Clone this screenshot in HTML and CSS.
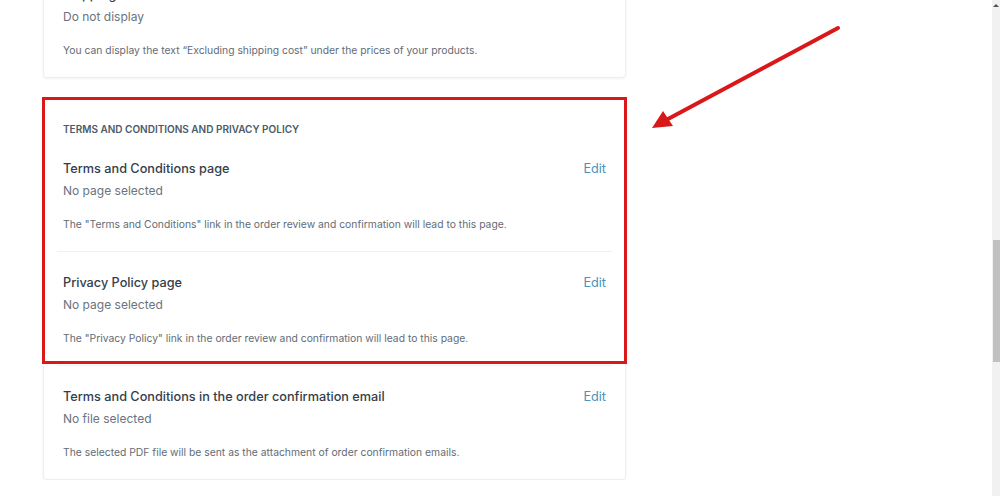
FILE: index.html
```html
<!DOCTYPE html>
<html lang="en">
<head>
    <meta charset="UTF-8">
    <meta name="viewport" content="width=device-width, initial-scale=1.0">
    <title>Legal pages</title>
    <link rel="stylesheet" href="styles.css">
</head>
<body>

    <div class="page">
        <div class="card card-top">
            <div class="item">
                <div class="item-head">
                    <span class="item-title">Shipping cost</span>
                </div>
                <div class="item-value">Do not display</div>
                <p class="item-desc">You can display the text “Excluding shipping cost” under the prices of your products.</p>
            </div>
        </div>

        <div class="card card-legal">
            <div class="highlight"></div>
            <h3 class="card-header">Terms and Conditions and Privacy Policy</h3>

            <div class="item">
                <div class="item-head">
                    <span class="item-title">Terms and Conditions page</span>
                    <a class="edit" href="#">Edit</a>
                </div>
                <div class="item-value">No page selected</div>
                <p class="item-desc">The "Terms and Conditions" link in the order review and confirmation will lead to this page.</p>
            </div>

            <div class="item">
                <div class="item-head">
                    <span class="item-title">Privacy Policy page</span>
                    <a class="edit" href="#">Edit</a>
                </div>
                <div class="item-value">No page selected</div>
                <p class="item-desc">The "Privacy Policy" link in the order review and confirmation will lead to this page.</p>
            </div>

            <div class="item">
                <div class="item-head">
                    <span class="item-title">Terms and Conditions in the order confirmation email</span>
                    <a class="edit" href="#">Edit</a>
                </div>
                <div class="item-value">No file selected</div>
                <p class="item-desc">The selected PDF file will be sent as the attachment of order confirmation emails.</p>
            </div>
        </div>
    </div>

    <!-- seta vermelha da anotação -->
    <svg class="arrow" width="1000" height="496" viewBox="0 0 1000 496">
        <line x1="838" y1="28" x2="668" y2="119" stroke="#d9181a" stroke-width="4" stroke-linecap="round"/>
        <polygon points="652,128 663,111 673,126" fill="#d9181a"/>
    </svg>

    <div class="scrollbar">
        <div class="scroll-up"></div>
        <div class="scroll-thumb"></div>
    </div>

</body>
</html>
```

FILE: styles.css
```css
body {
    margin: 0;
    font-family: Inter, "Noto Sans", sans-serif;
    background-color: #fff;
    color: #333e4b;
    overflow: hidden;
}
.page {
    width: 583px;
    margin-left: 43px;
    margin-top: -37px;
}
.card {
    position: relative;
    background: #fff;
    border: 1px solid #eceef1;
    border-radius: 4px;
    box-shadow: 0 1px 3px rgba(0, 0, 0, 0.05);
}
.card-legal {
    margin-top: 20px;
}
.highlight {
    position: absolute;
    left: -2px;
    top: -2px;
    width: 579px;
    height: 261px;
    border: 3px solid #d9181a;
}
.card-header {
    margin: 0;
    padding: 22px 19px 1px;
    font-size: 10px;
    line-height: 16px;
    font-weight: 600;
    text-transform: uppercase;
    color: #4c5a6b;
}
.item {
    margin: 0 13px;
    padding: 21px 6px 19px;
    border-top: 1px solid #eff1f3;
}
.card-header + .item,
.card-top .item {
    border-top: none;
}
.item-head {
    display: flex;
    justify-content: space-between;
    align-items: center;
}
.item-title {
    font-size: 12.7px;
    line-height: 20px;
    font-weight: 500;
    color: #333e4b;
}
.edit {
    font-size: 12.7px;
    line-height: 20px;
    color: #4a92ba;
    text-decoration: none;
}
.item-value {
    margin-top: 2px;
    font-size: 12px;
    line-height: 20px;
    color: #6b737d;
}
.item-desc {
    margin: 15px 0 0;
    font-size: 10.35px;
    line-height: 16px;
    color: #636c77;
}
.arrow {
    position: fixed;
    left: 0;
    top: 0;
    pointer-events: none;
}
.scrollbar {
    position: fixed;
    right: 0;
    top: 0;
    width: 8px;
    height: 496px;
    background: #f1f1f1;
}
.scroll-up {
    width: 0;
    height: 0;
    margin: 4px auto 0;
    border-left: 3px solid transparent;
    border-right: 3px solid transparent;
    border-bottom: 3px solid #505050;
}
.scroll-thumb {
    position: absolute;
    left: 1px;
    right: 0;
    top: 240px;
    height: 122px;
    background: #c1c1c1;
}
```
